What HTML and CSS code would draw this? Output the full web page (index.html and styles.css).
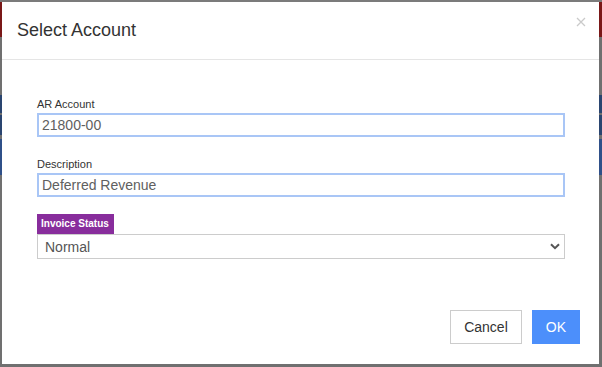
FILE: index.html
```html
<!DOCTYPE html>
<html lang="en">
<head>
    <meta charset="UTF-8">
    <meta name="viewport" content="width=device-width, initial-scale=1.0">
    <title>Select Account</title>
    <link rel="stylesheet" href="styles.css">
</head>
<body>
    <div class="modal">
        <div class="modal-header">
            <h1>Select Account</h1>
            <button class="close" type="button" aria-label="Close">
                <svg width="10" height="10" viewBox="0 0 10 10"><path d="M1 1L9 9M9 1L1 9" stroke="#cacaca" stroke-width="1.3" fill="none"/></svg>
            </button>
        </div>
        <div class="modal-body">
            <label for="arAccount">AR Account</label>
            <input type="text" id="arAccount" class="field" value="21800-00">

            <label for="description">Description</label>
            <input type="text" id="description" class="field field-last" value="Deferred Revenue">

            <span class="badge">Invoice Status</span>
            <div class="select-wrap">
                <select id="invoiceStatus">
                    <option>Normal</option>
                    <option>On Hold</option>
                    <option>Closed</option>
                </select>
                <svg class="chevron" width="10" height="7" viewBox="0 0 10 7"><path d="M1 1.2L5 5.2L9 1.2" stroke="#555" stroke-width="2" fill="none"/></svg>
            </div>

            <div class="modal-footer">
                <button type="button" class="btn btn-cancel">Cancel</button>
                <button type="button" class="btn btn-ok">OK</button>
            </div>
        </div>
    </div>
</body>
</html>
```

FILE: styles.css
```css
* {
    box-sizing: border-box;
}

body {
    margin: 0;
    padding: 2px 3px 3px 2px;
    height: 367px;
    overflow: hidden;
    font-family: "Liberation Sans", Arial, sans-serif;
    background-color: #707070;
    background-image:
        linear-gradient(to bottom, #7b7b7b 0 2px, #7a1818 2px 37px, transparent 37px),
        linear-gradient(to bottom, transparent 95px, #2a4570 95px 113px, transparent 113px 115px, #2a4570 115px 135px, transparent 135px 139px, #2f5089 139px 175px, transparent 175px);
}

.modal {
    width: 597px;
    height: 362px;
    background: #fff;
    display: flex;
    flex-direction: column;
}

.modal-header {
    display: flex;
    justify-content: space-between;
    align-items: flex-start;
    padding: 18px 13px 19px 15px;
    border-bottom: 1px solid #e5e5e5;
}

.modal-header h1 {
    margin: 0;
    font-size: 18px;
    font-weight: normal;
    line-height: 20px;
    color: #333;
}

.close {
    margin-top: -3px;
    padding: 0;
    border: none;
    background: none;
    line-height: 0;
    cursor: pointer;
}

.modal-body {
    flex: 1;
    display: flex;
    flex-direction: column;
    padding: 38px 34px 20px 35px;
}

label {
    display: block;
    font-size: 11px;
    line-height: 13px;
    color: #333;
    margin-bottom: 2px;
}

.field {
    display: block;
    width: 100%;
    height: 24px;
    margin: 0 0 21px 0;
    padding: 0 3px;
    border: 2px solid #a9c6f6;
    font-family: inherit;
    font-size: 14px;
    color: #606060;
    outline: none;
}

.field-last {
    margin-bottom: 17px;
}

.badge {
    align-self: flex-start;
    padding: 0 5px 0 4px;
    background-color: #882d9c;
    color: #fff;
    font-size: 10px;
    font-weight: bold;
    line-height: 20px;
}

.select-wrap {
    position: relative;
}

.select-wrap select {
    display: block;
    width: 100%;
    height: 25px;
    padding: 0 7px;
    border: 1px solid #ccc;
    border-radius: 0;
    background: #fff;
    font-family: inherit;
    font-size: 14px;
    color: #555;
    appearance: none;
    -webkit-appearance: none;
    outline: none;
}

.chevron {
    position: absolute;
    right: 5px;
    top: 9px;
    pointer-events: none;
}

.modal-footer {
    margin-top: auto;
    margin-right: -15px;
    display: flex;
    justify-content: flex-end;
    gap: 10px;
}

.btn {
    height: 34px;
    padding: 0 13px;
    font-family: inherit;
    font-size: 14px;
    border-radius: 0;
    cursor: pointer;
}

.btn-cancel {
    background: #fff;
    border: 1px solid #ccc;
    color: #333;
}

.btn-ok {
    background: #4c8ffb;
    border: 1px solid #4c8ffb;
    color: #fff;
}
```
